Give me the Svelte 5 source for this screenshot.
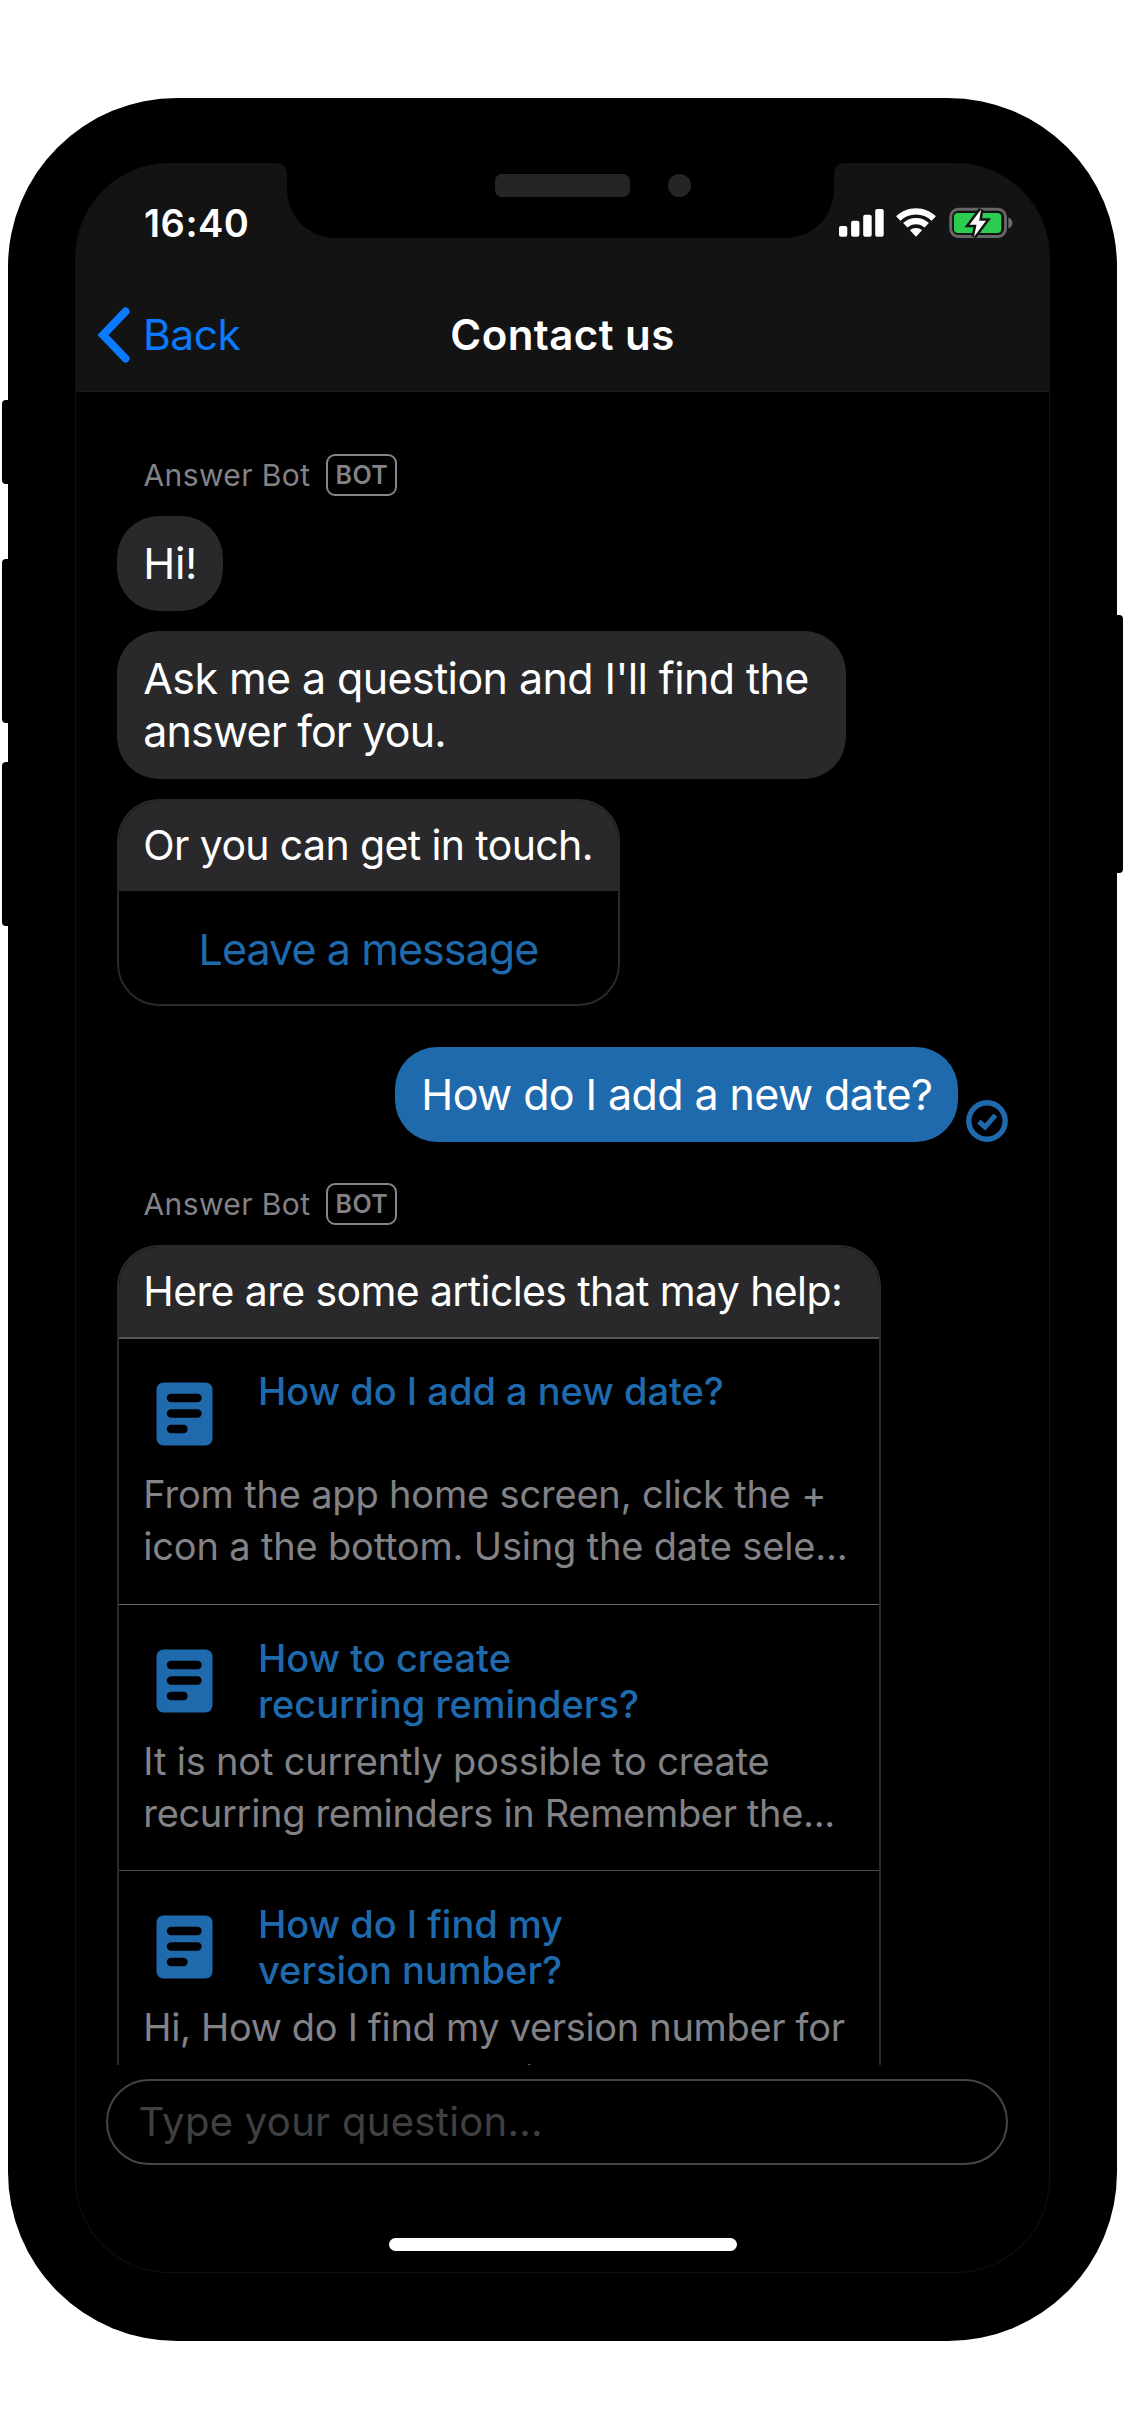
<script>
  const user = 'How do I add a new date?';
  const articles = [
    { title: ['How do I add a new date?'], text: ['From the app home screen, click the +', 'icon a the bottom. Using the date sele...'] },
    { title: ['How to create', 'recurring reminders?'], text: ['It is not currently possible to create', 'recurring reminders in Remember the...'] },
    { title: ['How do I find my', 'version number?'], text: ['Hi, How do I find my version number for', 'the app and web versions?'] }
  ];
  const buttons = [
    { side: 'left', top: 400, height: 84 },
    { side: 'left', top: 559, height: 164 },
    { side: 'left', top: 762, height: 164 },
    { side: 'right', top: 615, height: 258 }
  ];
</script>

{#snippet sender()}
  <div class="sender"><span class="name">Answer Bot</span><span class="badge">BOT</span></div>
{/snippet}

<main class="stage">
  <div class="phone">
    {#each buttons as b}
      <i class="key {b.side}" style="top:{b.top - 98}px;height:{b.height}px"></i>
    {/each}
    <div class="screen">
      <header>
        <div class="status">
          <span class="time">16:40</span>
          <svg class="indicators" width="176" height="32" viewBox="838 207 176 32">
            <g fill="#fff">
              <rect x="839" y="226" width="8.3" height="10.8" rx="2" />
              <rect x="851.1" y="220.7" width="8.3" height="16.1" rx="2" />
              <rect x="863.2" y="214.7" width="8.5" height="22.1" rx="2" />
              <rect x="875.2" y="209" width="8.5" height="27.8" rx="2" />
              <path d="M916 208.2c7.7 0 14.7 3 19.9 8l-4.3 4.5a22.500 22.500 0 0 0-31.2 0l-4.3-4.5c5.2-5 12.2-8 19.9-8z" />
              <path d="M916 218c5 0 9.500 1.900 12.900 5.100l-4.400 4.500a12.300 12.300 0 0 0-17 0l-4.400-4.500c3.400-3.200 7.900-5.100 12.900-5.100z" />
              <path d="M916 228c2.300 0 4.400.9 6 2.300l-6 6.500-6-6.500c1.600-1.400 3.700-2.300 6-2.300z" />
            </g>
            <rect x="950.7" y="209.300" width="54.800" height="27.200" rx="7.500" fill="none" stroke="#666" stroke-width="2.900" />
            <path d="M1008.300 217.500c5.500 1.500 5.500 9.500 0 11z" fill="#6a6a6a" />
            <rect x="954" y="213" width="47.300" height="20" rx="4" fill="#2ccc50" />
            <path d="M981 209.500L969.500 224.800H976.500L974 236.800L986 220.700H979.200Z" fill="#fff" stroke="#131313" stroke-width="5" paint-order="stroke" />
          </svg>
        </div>
        <nav>
          <div class="back">
            <svg width="32" height="56" viewBox="0 0 32 56"><path d="M27.500 4.500L5 28 27.500 51.500" fill="none" stroke="#0a7aff" stroke-width="8" stroke-linecap="round" stroke-linejoin="miter" /></svg>
            <span>Back</span>
          </div>
          <h1>Contact us</h1>
        </nav>
      </header>
      <div class="notch">
        <svg width="571" height="75" viewBox="0 0 571 75"><path d="M0 0C9 0 12 4 12 14V25C12 55 34 75 62 75H509C537 75 559 55 559 25V14C559 4 562 0 571 0Z" fill="#000" /></svg>
        <i class="speaker"></i><i class="camera"></i>
      </div>

      <section class="chat">
        {@render sender()}
        <p class="bubble hi">Hi!</p>
        <p class="bubble ask"><span>Ask me a question and I'll find the</span><span class="tail">answer for you.</span></p>
        <div class="card touch">
          <p class="head">Or you can get in touch.</p>
          <a class="leave">Leave a message</a>
        </div>
        <div class="mine">
          <p class="bubble blue">{user}</p>
          <svg width="42" height="42" viewBox="0 0 42 42" fill="none" stroke="#1f6aad"><circle cx="21" cy="21" r="18.200" stroke-width="5.400" /><path d="M12.800 21.500l6.300 5.400L29.500 15.200" stroke-width="5" /></svg>
        </div>
        {@render sender()}
        <div class="card list">
          <p class="head">Here are some articles that may help:</p>
          {#each articles as a}
            <article>
              <div class="top">
                <svg width="57" height="64" viewBox="0 0 57 64"><rect x=".5" y=".5" width="56" height="63" rx="7" fill="#1f6aad" /><path d="M15 16h26.500M15 31.500h26.500M15 47h12.500" stroke="#000" stroke-width="8.400" stroke-linecap="round" /></svg>
                <h2>{#each a.title as l}<span>{l}</span>{/each}</h2>
              </div>
              <div class="text">{#each a.text as l}<span>{l}</span>{/each}</div>
            </article>
          {/each}
        </div>
      </section>

      <footer>
        <div class="field">Type your question...</div>
        <i class="home"></i>
      </footer>
    </div>
  </div>
</main>

<style>
  :global(body) { background: #fff; }
  .stage { width: 1125px; height: 2436px; box-sizing: border-box; padding: 98px 8px 0; font-family: Inter, "Liberation Sans", sans-serif; overflow: hidden; }
  p, h1, h2 { margin: 0; font-weight: 400; }
  .phone { position: relative; box-sizing: border-box; width: 1109px; height: 2243px; padding: 65px 67px 0; background: #000; border-radius: 169px; }
  .key { position: absolute; width: 10px; background: #000; border-radius: 4px; }
  .key.left { left: -6px; }
  .key.right { right: -6px; }
  .screen { position: relative; box-sizing: border-box; width: 975px; height: 2110px; border: 1px solid #111; border-top: 0; border-radius: 94px; overflow: hidden; display: flex; flex-direction: column; color: #fff; }
  header { height: 229px; box-sizing: border-box; background: #131313; border-bottom: 1px solid #1c1c1c; flex: none; }
  .status { display: flex; justify-content: space-between; padding: 44px 35px 0 68px; height: 83px; }
  .time { font-size: 38px; font-weight: 600; line-height: 34px; letter-spacing: .5px; margin-top: -1px; }
  nav { display: grid; grid-template-columns: 1fr auto 1fr; align-items: center; padding: 0 22px; height: 60px; margin-top: -13px; padding-top: 28px; }
  .back { display: flex; align-items: center; gap: 13px; color: #0a7aff; font-size: 42.500px; line-height: 56px; letter-spacing: -.5px; }
  h1 { font-size: 42px; font-weight: 600; line-height: 56px; letter-spacing: .45px; }
  .notch { position: absolute; left: 199px; top: 0; }
  .notch svg { display: block; }
  .speaker { position: absolute; left: 220px; top: 11px; width: 135px; height: 23px; border-radius: 7px; background: #252525; }
  .camera { position: absolute; left: 393px; top: 11px; width: 23px; height: 23px; border-radius: 50%; background: #252525; }
  .chat { height: 1673px; flex: none; overflow: hidden; box-sizing: border-box; padding: 62px 41px 0; display: flex; flex-direction: column; align-items: flex-start; }
  .sender { display: flex; align-items: center; gap: 16px; height: 42px; padding-left: 26.500px; margin-bottom: 20px; color: #828287; flex: none; }
  .name { font-size: 30px; letter-spacing: .4px; }
  .badge { box-sizing: border-box; width: 71px; height: 42px; border: 2px solid #85858a; border-radius: 9px; font-size: 25px; line-height: 39px; font-weight: 600; text-align: center; letter-spacing: .5px; }
  .bubble { box-sizing: border-box; flex: none; border-radius: 42px; background: #29292b; font-size: 43px; line-height: 53px; padding: 21px 26.300px; white-space: nowrap; letter-spacing: -.6px; }
  .hi { width: 106px; height: 95px; margin-bottom: 20px; letter-spacing: -.3px; }
  .ask { width: 729px; height: 148px; margin-bottom: 20px; }
  .ask span { display: block; }
  .ask .tail { letter-spacing: -.88px; }
  .card { box-sizing: border-box; flex: none; border: 2px solid #29292b; overflow: hidden; }
  .touch { width: 503px; height: 207px; border-radius: 42px; }
  .head { background: #29292b; font-size: 41px; line-height: 53px; height: 90px; box-sizing: border-box; padding: 18px 24.300px; white-space: nowrap; letter-spacing: -.62px; }
  .leave { display: block; text-align: center; color: #1f6aad; font-size: 43px; line-height: 53px; padding-top: 32px; letter-spacing: -.93px; }
  .mine { align-self: flex-end; display: flex; align-items: flex-end; gap: 8px; margin: 41px 0; }
  .blue { background: #1f6aad; width: 563px; height: 95px; }
  .list { width: 764px; height: 900px; border-radius: 42px 42px 0 0; }
  article { box-sizing: border-box; height: 267px; border-top: 2px solid #565659; padding: 0 25px; white-space: nowrap; }
  article ~ article { border-top-width: 1px; border-color: #68686c; height: 266px; }
  article:last-child { border-color: #48484b; }
  .top { display: flex; height: 129px; padding: 30px 0 0 12px; gap: 45px; box-sizing: border-box; }
  article ~ article .top { height: 130px; padding-top: 31px; }
  .top svg { margin-top: 13px; flex: none; }
  h2 span, .text span { display: block; }
  h2 { color: #1f6aad; font-size: 38px; font-weight: 500; line-height: 45.500px; }
  .text { color: #828287; font-size: 38px; line-height: 52px; letter-spacing: -.18px; margin-left: -.7px; }
  article ~ article .text span:nth-child(2), article:last-child .text { letter-spacing: -.33px; }
  footer { display: flex; flex-direction: column; align-items: center; padding-top: 14px; }
  .field { box-sizing: border-box; width: 902px; height: 86px; border: 2px solid #454547; border-radius: 43px; padding-left: 30.500px; margin-right: 11px; font-size: 40px; line-height: 82px; color: #404042; letter-spacing: .3px; }
  .home { width: 348px; height: 13px; border-radius: 7px; background: #fff; margin-top: 73px; }
</style>
